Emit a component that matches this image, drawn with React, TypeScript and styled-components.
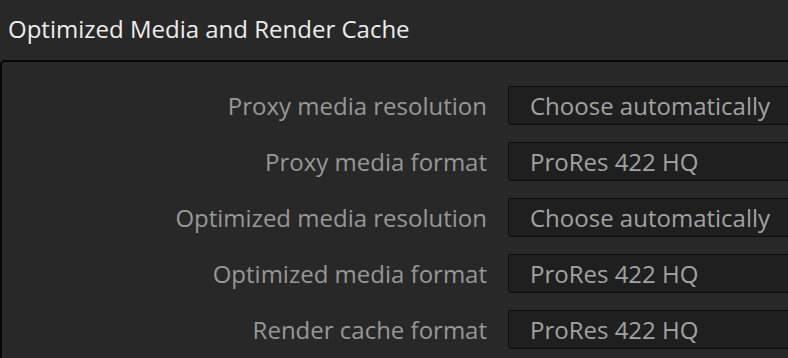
import React from 'react';
import { styled, createGlobalStyle } from 'styled-components';

const GlobalStyle = createGlobalStyle`
  html, body {
    margin: 0;
    padding: 0;
    background: #282828;
    overflow: hidden;
  }
  body {
    font-family: "Open Sans", "Noto Sans", sans-serif;
  }
`;

const rows = [
  { label: 'Proxy media resolution', value: 'Choose automatically' },
  { label: 'Proxy media format', value: 'ProRes 422 HQ' },
  { label: 'Optimized media resolution', value: 'Choose automatically' },
  { label: 'Optimized media format', value: 'ProRes 422 HQ' },
  { label: 'Render cache format', value: 'ProRes 422 HQ' },
];

export default function App() {
  return (
    <Page>
      <GlobalStyle />
      <Title>Optimized Media and Render Cache</Title>
      <Panel>
        <Form>
          {rows.map((r) => (
            <React.Fragment key={r.label}>
              <Label>{r.label}</Label>
              <Select>{r.value}</Select>
            </React.Fragment>
          ))}
        </Form>
      </Panel>
    </Page>
  );
}

const Page = styled.div`
  width: 788px;
  height: 358px;
  overflow: hidden;
  background: #282828;
`;

const Title = styled.h2`
  margin: 0;
  height: 60px;
  padding: 12px 0 0 8px;
  box-sizing: border-box;
  font-size: 24px;
  font-weight: 400;
  line-height: 34px;
  color: #ececec;
`;

const Panel = styled.section`
  width: 840px;
  height: 340px;
  box-sizing: border-box;
  border: 2px solid #050505;
  border-radius: 5px;
  background: #282828;
  padding: 24px 0 0 0;
`;

const Form = styled.div`
  display: grid;
  grid-template-columns: 485px 320px;
  grid-auto-rows: 39px;
  column-gap: 21px;
  row-gap: 17px;
`;

const Label = styled.div`
  display: flex;
  align-items: center;
  justify-content: flex-end;
  white-space: nowrap;
  font-size: 24px;
  color: #979797;
`;

const Select = styled.div`
  display: flex;
  align-items: center;
  box-sizing: border-box;
  padding-left: 21px;
  border: 1px solid #0c0c0c;
  border-radius: 3px;
  background: #1f1f1f;
  white-space: nowrap;
  font-size: 24px;
  color: #a2a2a2;
`;
